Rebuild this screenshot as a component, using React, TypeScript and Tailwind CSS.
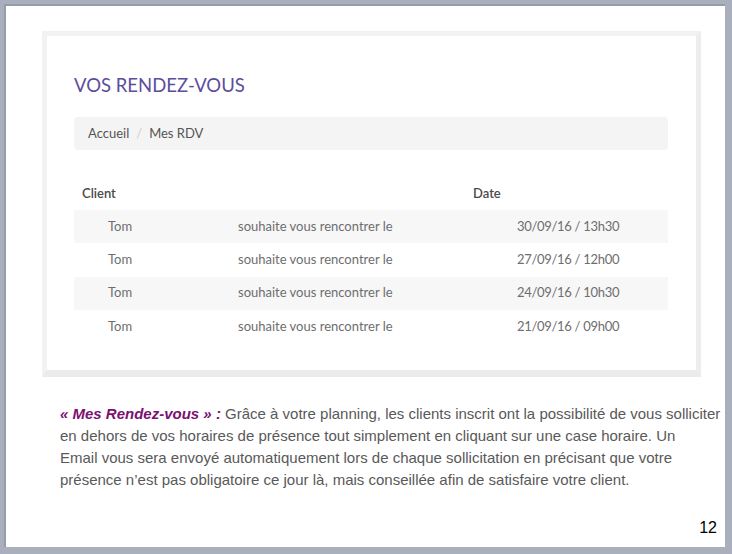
import React from "react";

const rows = [
  { name: "Tom", date: "30/09/16 / 13h30" },
  { name: "Tom", date: "27/09/16 / 12h00" },
  { name: "Tom", date: "24/09/16 / 10h30" },
  { name: "Tom", date: "21/09/16 / 09h00" },
];

export default function App() {
  return (
    <div className="w-[732px] h-[554px] bg-[#a9afbc] pt-[4px] pl-[4px] pr-[7px] pb-[7px]">
      <div className="w-full h-full border-t-2 border-l-2 border-[#959cab] bg-white flex flex-col">
        {/* Screenshot panel */}
        <div
          className="ml-[36px] mt-[25px] w-[659px] h-[346px] border-[5px] border-b-[7px] border-[#f2f2f2] border-b-[#ebebeb] border-r-[#ededed] bg-white flex flex-col px-[27px] pt-[35px]"
          style={{ fontFamily: "Lato, 'Open Sans', sans-serif" }}
        >
          <div className="h-[28px] leading-[28px] text-[18.5px] text-[#5d4d9d]">
            VOS RENDEZ-VOUS
          </div>
          <div className="mt-[18px] h-[33px] w-[594px] rounded-[4px] bg-[#f4f4f4] flex items-center pl-[14px] text-[13px] text-[#555]">
            <span>Accueil</span>
            <span className="mx-[7px] text-[#ccc]">/</span>
            <span>Mes RDV</span>
          </div>
          <div className="mt-[27px] w-[594px] text-[13px]">
            <div className="h-[33px] flex items-center font-semibold text-[#4a4a4a]">
              <span className="pl-[8px] w-[399px]">Client</span>
              <span>Date</span>
            </div>
            {rows.map((r, i) => (
              <div
                key={i}
                className={`h-[33.3px] flex items-center text-[#6e6e6e] ${i % 2 === 0 ? "bg-[#f7f7f7]" : "bg-white"}`}
              >
                <span className="pl-[34px] w-[164px]">{r.name}</span>
                <span className="w-[279px]">souhaite vous rencontrer le</span>
                <span className="tracking-[-0.3px]">{r.date}</span>
              </div>
            ))}
          </div>
        </div>

        {/* Description */}
        <div
          className="ml-[54px] mt-[26px] text-[15px] leading-[22px] text-[#595959] whitespace-nowrap"
          style={{ fontFamily: "'Liberation Sans', Arial, sans-serif" }}
        >
          <div>
            <span className="font-bold italic text-[#7b1070]">« Mes Rendez-vous » :</span> Grâce à votre planning, les clients inscrit ont la possibilité de vous solliciter
          </div>
          <div>en dehors de vos horaires de présence tout simplement en cliquant sur une case horaire. Un</div>
          <div>Email vous sera envoyé automatiquement lors de chaque sollicitation en précisant que votre</div>
          <div>présence n’est pas obligatoire ce jour là, mais conseillée afin de satisfaire votre client.</div>
        </div>

        <div className="mt-auto flex justify-end pr-[8px] pb-[10px]">
          <span
            className="text-[16px] leading-[18px] text-black"
            style={{ fontFamily: "'Liberation Sans', Arial, sans-serif" }}
          >
            12
          </span>
        </div>
      </div>
    </div>
  );
}
